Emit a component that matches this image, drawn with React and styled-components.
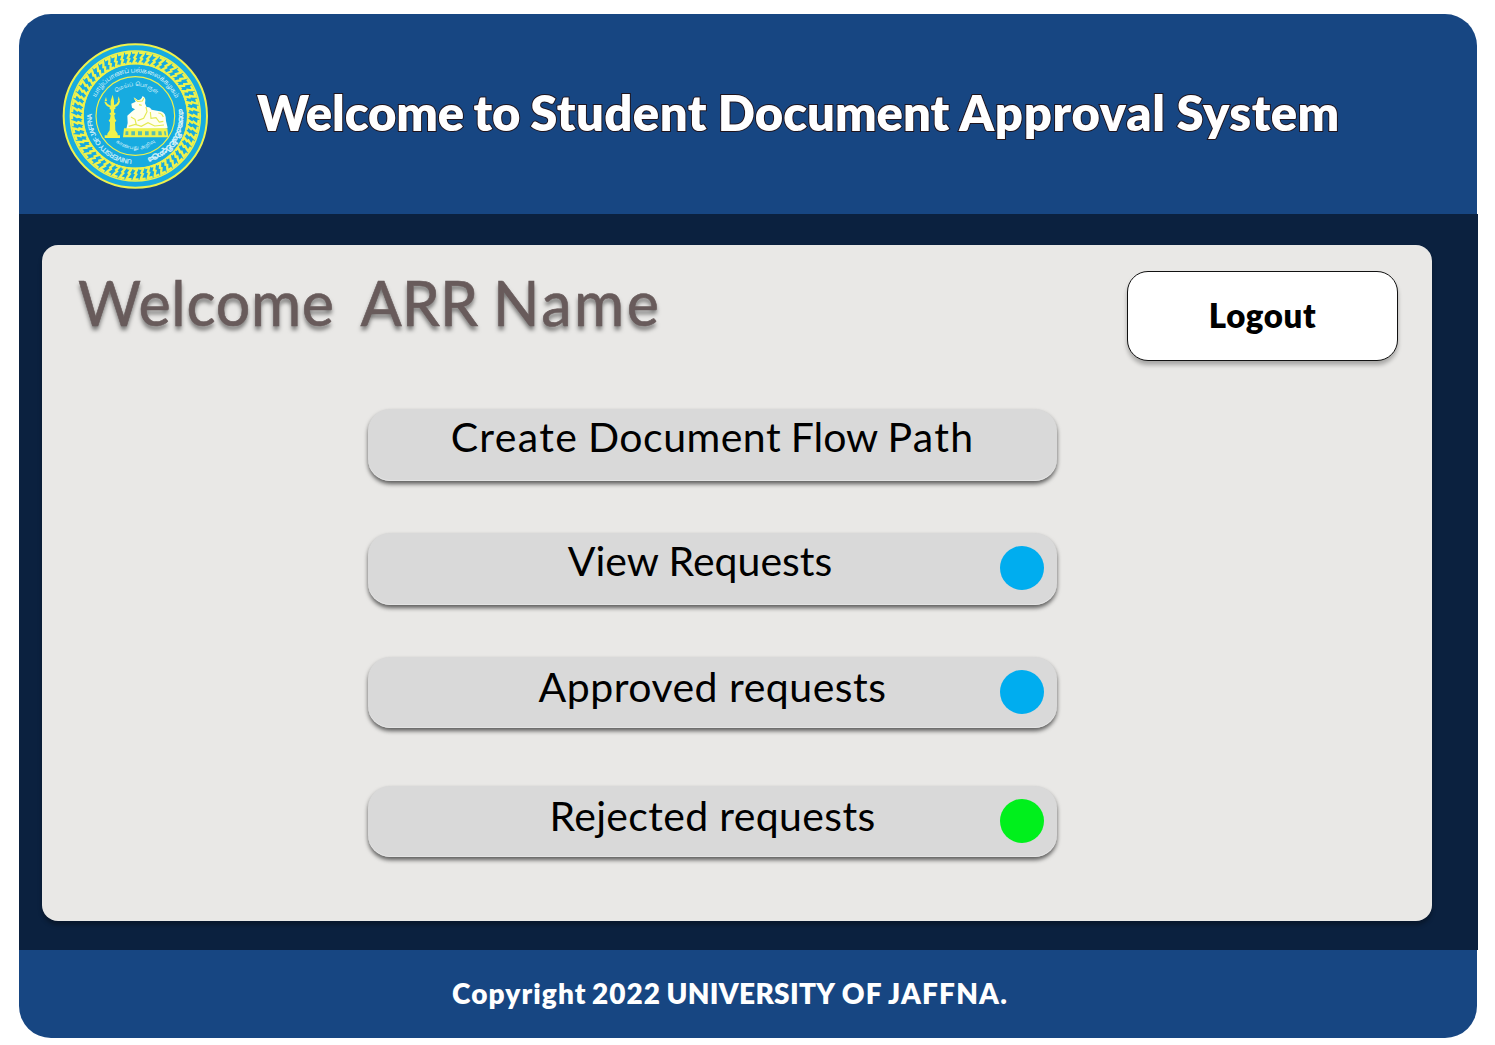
import React from "react";
import styled, { createGlobalStyle } from "styled-components";

const Global = createGlobalStyle`
  * { box-sizing: border-box; }
  body { margin: 0; background: #fff; font-family: Lato, "Open Sans", sans-serif; }
`;

const Page = styled.div`
  width: 1495px;
  height: 1045px;
  padding: 14px 17px 7px 19px;
  display: flex;
  flex-direction: column;
  overflow: hidden;
`;

const Header = styled.header`
  width: 1458px;
  height: 200px;
  flex: none;
  display: flex;
  align-items: flex-start;
  padding: 22px 0 0 36px;
  background: #174682;
  border-radius: 32px 32px 0 0;
`;

const Title = styled.h1`
  margin: 46px 0 0 42px;
  font-size: 49px;
  line-height: 60px;
  font-weight: 800;
  color: #fff;
  white-space: nowrap;
  -webkit-text-stroke: 2px #20141c;
  paint-order: stroke fill;
`;

const Word = styled.span`
  letter-spacing: ${(p) => p.$track || 0}px;
  margin-left: ${(p) => p.$gap || 0}px;
`;

const Main = styled.main`
  width: 1459px;
  height: 736px;
  flex: none;
  padding: 31px 46px 29px 23px;
  background: #0b213f;
`;

const Panel = styled.section`
  height: 676px;
  padding: 26px 34px 0 37px;
  border-radius: 16px;
  background: #e9e8e6;
  box-shadow: 0 4px 4px rgba(0, 0, 0, 0.3);
`;

const TopRow = styled.div`
  display: flex;
  justify-content: space-between;
  align-items: flex-start;
  height: 90px;
`;

const Greeting = styled.h2`
  margin: -1px 0 0 -1px;
  font-size: 61px;
  line-height: 66px;
  font-weight: 400;
  color: #685b5b;
  white-space: pre;
  -webkit-text-stroke: 0.6px #685b5b;
  text-shadow: 0 4px 4px rgba(0, 0, 0, 0.5);
`;

const Logout = styled.button`
  width: 271px;
  height: 90px;
  padding: 0 0 3px;
  border: 1px solid #111;
  border-radius: 21px;
  background: #fff;
  font: 800 33px/80px Lato, sans-serif;
  letter-spacing: 0.6px;
  color: #000;
  box-shadow: 0 4px 4px rgba(0, 0, 0, 0.28);
`;

const Menu = styled.nav`
  display: flex;
  flex-direction: column;
  width: 689px;
  margin: 48px 0 0 289px;
`;

const Item = styled.button`
  display: grid;
  grid-template-columns: 44px 1fr 44px;
  align-items: start;
  height: ${(p) => p.$height || 72}px;
  margin: 0 0 ${(p) => p.$after || 0}px;
  padding: 0 13px;
  border: 0;
  border-radius: 22px;
  background: #d9d9d9;
  box-shadow: 0 3px 4px rgba(0, 0, 0, 0.6), inset 0 -1px 0 #e4e4e4;
`;

const Label = styled.span`
  grid-column: 2;
  justify-self: center;
  padding-right: ${(p) => p.$shift || 0}px;
  padding-top: ${(p) => p.$drop || 3}px;
  font: 400 41px/50px Lato, sans-serif;
  letter-spacing: ${(p) => p.$track || 0}px;
  color: #000;
  white-space: nowrap;
`;

const Dot = styled.i`
  grid-column: 3;
  width: 44px;
  height: 44px;
  margin-top: 13.4px;
  border-radius: 50%;
  background: ${(p) => p.$color};
`;

const Footer = styled.footer`
  width: 1458px;
  height: 88px;
  flex: none;
  padding: 26px 0 0 433px;
  background: #174682;
  border-radius: 0 0 32px 32px;
  font-size: 28px;
  line-height: 34px;
  font-weight: 800;
  color: #fff;
  white-space: nowrap;
`;

const Seal = styled.svg`
  flex: none;
  width: 160px;
  height: 160px;
  font-family: "Noto Sans Tamil", "Noto Sans Sinhala", "Noto Sans", sans-serif;
`;

const YELLOW = "#eff24c";
const LINKS = 56;

function Crest() {
  const links = Array.from({ length: LINKS }, (_, i) => (i * 360) / LINKS);
  return (
    <Seal viewBox="0 0 480 480" aria-label="University of Jaffna">
      <defs>
        <path id="ringOuter" d="M241 371A131 131 0 1 1 241.1 371" />
        <path id="ringInner" d="M241 330A90 90 0 1 1 241.1 330" />
        <path id="ringLow" d="M148 240A93 100 0 0 0 334 240" />
      </defs>
      <circle cx="241" cy="240" r="215" fill="#17abe0" stroke={YELLOW} strokeWidth="6" />
      <circle cx="241" cy="240" r="195" fill="none" stroke={YELLOW} strokeWidth="4.5" />
      <circle cx="241" cy="240" r="157" fill="none" stroke={YELLOW} strokeWidth="4.5" />
      {links.map((a) => (
        <path
          key={a}
          transform={`rotate(${a} 241 240)`}
          d="M231 50H246Q243 58 238 65L242 68Q238 74 235 81H247"
          fill="none"
          stroke={YELLOW}
          strokeWidth="7"
        />
      ))}
      <circle cx="241" cy="240" r="118" fill="none" stroke={YELLOW} strokeWidth="3.5" />
      <g fill="#dcf3fa">
        <text fontSize="20" stroke="#dcf3fa" strokeWidth="0.5" fontFamily="Liberation Sans, sans-serif">
          <textPath href="#ringOuter" startOffset="10" textLength="202">UNIVERSITY OF JAFFNA</textPath>
        </text>
        <text fontSize="19">
          <textPath href="#ringOuter" startOffset="262" textLength="300">யாழ்ப்பாணப் பல்கலைக்கழகம்</textPath>
        </text>
        <text fontSize="21" fontWeight="700" stroke="#dcf3fa" strokeWidth="0.8">
          <textPath href="#ringOuter" startOffset="592" textLength="190">යාපනය විශ්වවිද්‍යාලය</textPath>
        </text>
        <text fontSize="16">
          <textPath href="#ringInner" startOffset="220" textLength="132">மெய்ப் பொருள்</textPath>
        </text>
        <text fontSize="14">
          <textPath href="#ringLow" startOffset="88" textLength="128">காண்பது அறிவு</textPath>
        </text>
      </g>
      <g fill={YELLOW}>
        <path d="M173 176l4 18v13q10-3 13-12h5q-2 13-14 18v6h-3l-1 10 5 4-4 5 2 10 4 6-4 5 1 24 7 10v5h7v8h-46v-8h8v-5l7-10 1-24-4-5 4-6 2-10-4-5 5-4-1-9h-3v-6q-13-5-16-17h5q4 9 14 12v-14z" />
        <path d="M153 183l-4 12h7zM191 181l-3 13h7z" />
        <path fill="#fffff0" d="M236 184l12 8q10 2 15-12 9 5 8 14l-1 8 5 12q9-3 15 7l20 4q20 2 22 18l1 12 5 20-8 3-116 1 4-18-1-22 13-12 10-7-9-5-2-12 13-6z" />
        <path d="M207 277h130l3 27H204z" />
      </g>
      <g fill="#58bdb0">
        <path d="M212 286h8v11h-9zM229 286h11v12h-11zM249 286h12v12h-12zM270 286h11v12h-11zM290 286h11v12h-11zM310 286h9l2 12h-11zM327 286h5l2 12h-5z" />
      </g>
      <g fill="none" stroke="#e4ea52" strokeWidth="3.5">
        <path d="M238 187l10 9 14-1 5-9M252 206l8 2M273 213l3 14-10 20-18 7M286 228l2 19 15-2 10 13 12-2M310 231q11 1 15 12M228 243l12 7 4 16M221 271l20-6 18 6 20-11 20 10 28-3" />
      </g>
    </Seal>
  );
}

export default function App() {
  return (
    <>
      <Global />
      <Page>
        <Header>
          <Crest />
          <Title>
            <Word $track={-0.15}>Welcome</Word>{" "}
            <Word $gap={-2}>to</Word>{" "}
            <Word $gap={-1.5} $track={0.4}>Student</Word>{" "}
            <Word $gap={-0.5}>Document</Word>{" "}
            <Word $gap={-1.5} $track={0.7}>Approval</Word>{" "}
            <Word $gap={-0.5} $track={0.5}>System</Word>
          </Title>
        </Header>
        <Main>
          <Panel>
            <TopRow>
              <Greeting>
                <Word $track={0.7}>Welcome</Word>{"  "}
                <Word $gap={-5.5}>ARR</Word>{" "}
                <Word $gap={-1} $track={2.6}>Name</Word>
              </Greeting>
              <Logout>Logout</Logout>
            </TopRow>
            <Menu>
              <Item $after={52}>
                <Label>
                  <Word $track={1.4}>Create</Word>{" "}
                  <Word $gap={-1} $track={0.5}>Document</Word>{" "}
                  <Word $gap={-1}>Flow</Word>{" "}
                  <Word $gap={-0.5} $track={1.3}>Path</Word>
                </Label>
              </Item>
              <Item $after={51.5}><Label $shift={25}>View Requests</Label><Dot $color="#00adef" /></Item>
              <Item $after={58} $height={71.5}><Label $drop={5} $track={0.5}>Approved requests</Label><Dot $color="#00adef" /></Item>
              <Item $height={71}><Label $drop={5} $track={0.35}>Rejected requests</Label><Dot $color="#00f01c" /></Item>
            </Menu>
          </Panel>
        </Main>
        <Footer>
          <Word $track={1.1}>Copyright</Word>{" "}
          <Word $gap={-1} $track={1}>2022</Word>{" "}
          <Word $gap={-1} $track={0.3}>UNIVERSITY</Word>{" "}
          <Word $track={1.2}>OF</Word>{" "}
          <Word $gap={-1.5} $track={1.2}>JAFFNA.</Word>
        </Footer>
      </Page>
    </>
  );
}
